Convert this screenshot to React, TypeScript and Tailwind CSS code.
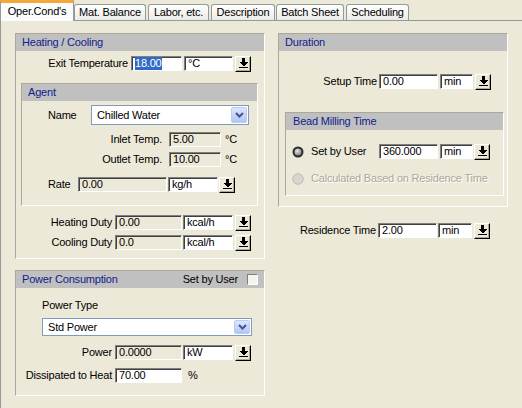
import React from 'react';

function ArrowBtn({ cls = '' }: { cls?: string }) {
  return (
    <div className={`${cls} w-[16px] h-[16px] shrink-0 bg-[#ECE9D8] border border-t-white border-l-white border-r-black border-b-black shadow-[inset_-1px_-1px_0_#ACA899] flex items-center justify-center`}>
      <svg width="9" height="11" viewBox="0 0 9 11" shapeRendering="crispEdges">
        <rect x="3" y="0" width="3" height="4" fill="#000" />
        <polygon points="0,4 9,4 4.5,8.5" fill="#000" />
        <rect x="0" y="9" width="9" height="1" fill="#000" />
      </svg>
    </div>
  );
}

function Field({ cls, value, ro = false, sel = false }: { cls: string; value: string; ro?: boolean; sel?: boolean }) {
  return (
    <div className={`${cls} h-[15px] shrink-0 border border-t-[#808080] border-l-[#808080] border-r-white border-b-white shadow-[inset_1px_1px_0_#404040] flex items-center pl-[3px] overflow-hidden whitespace-nowrap ${ro ? 'bg-[#ECE9D8]' : 'bg-white'}`}>
      {sel ? <span className="bg-[#316AC5] text-white h-[13px] flex items-center">{value}</span> : <span>{value}</span>}
    </div>
  );
}

function Combo({ cls, text }: { cls: string; text: string }) {
  return (
    <div className={`${cls} shrink-0 bg-white border border-[#7F9DB9] flex items-stretch pl-[5px]`}>
      <span className="flex-1 flex items-center">{text}</span>
      <div className="w-[16px] my-[1px] mr-[1px] rounded-[2px] border border-[#BACCF5] bg-gradient-to-b from-[#DCE6FD] to-[#B2C6F3] flex items-center justify-center">
        <svg width="9" height="6" viewBox="0 0 9 6">
          <path d="M1 1 L4.5 4.5 L8 1" stroke="#3F5590" strokeWidth="2" fill="none" />
        </svg>
      </div>
    </div>
  );
}

function Panel({ cls, title, right, children, hpl = 'pl-[6px]' }: { cls: string; title: string; right?: React.ReactNode; children: React.ReactNode; hpl?: string }) {
  return (
    <div className={`${cls} border border-t-[#ACA899] border-l-[#ACA899] border-r-white border-b-white flex flex-col`}>
      <div className={`h-[17px] shrink-0 bg-[#C0C0C0] flex items-center ${hpl} text-[#10208C]`}>
        <span className="flex-1">{title}</span>
        {right}
      </div>
      {children}
    </div>
  );
}

function Radio({ on }: { on: boolean }) {
  return on ? (
    <svg width="12" height="12" viewBox="0 0 12 12" className="shrink-0">
      <defs>
        <radialGradient id="rg" cx="40%" cy="35%" r="70%">
          <stop offset="0%" stopColor="#e8e8e8" />
          <stop offset="100%" stopColor="#7a7a7a" />
        </radialGradient>
      </defs>
      <circle cx="6" cy="6" r="5.5" fill="#2a2a2a" />
      <circle cx="6" cy="6" r="3.6" fill="url(#rg)" />
    </svg>
  ) : (
    <svg width="12" height="12" viewBox="0 0 12 12" className="shrink-0">
      <circle cx="6" cy="6" r="5.3" fill="#D6D5CF" stroke="#B3B2AA" strokeWidth="0.8" />
    </svg>
  );
}

const tabBase = 'shrink-0 h-[16px] border border-b-0 border-[#919B9C] rounded-t-[3px] bg-gradient-to-b from-white to-[#ECEBE6] flex items-center justify-center whitespace-nowrap';

export default function App() {
  return (
    <div className="w-[522px] h-[408px] overflow-hidden bg-[#ECE9D8] font-['Liberation_Sans',Arial,sans-serif] text-[11px] leading-[13px] tracking-[-0.2px] text-black flex flex-col">
      {/* tabs */}
      <div className="h-[20px] shrink-0 flex items-end">
        <div className="relative z-10 w-[74px] h-[21px] -mb-[1px] shrink-0 bg-[#FCFCFE] border-x border-[#919B9C] border-t-[3px] border-t-[#F3A93A] flex items-center justify-center pb-[2px] whitespace-nowrap">Oper.Cond's</div>
        <div className={`${tabBase} w-[72px]`}>Mat. Balance</div>
        <div className={`${tabBase} w-[61px] ml-[2px]`}>Labor, etc.</div>
        <div className={`${tabBase} w-[64px] ml-[2px]`}>Description</div>
        <div className={`${tabBase} w-[68px] ml-[1px]`}>Batch Sheet</div>
        <div className={`${tabBase} w-[63px] ml-[2px]`}>Scheduling</div>
      </div>

      {/* page */}
      <div className="flex-1 border-t border-l border-[#919B9C] flex items-start pl-[14px] pt-[12px]">
        {/* left column */}
        <div className="w-[250px] shrink-0 flex flex-col">
          <Panel cls="w-[250px]" title="Heating / Cooling">
            <div className="mt-[5px] flex items-center h-[15px]">
              <span className="w-[115px] text-right pr-[3px] whitespace-nowrap">Exit Temperature</span>
              <Field cls="w-[51px]" value="18.00" sel />
              <Field cls="w-[49px] ml-[2px]" value="°C" />
              <ArrowBtn cls="ml-[2px]" />
            </div>

            <Panel cls="mt-[12px] ml-[5px] w-[237px] pb-[13px]" title="Agent">
              <div className="mt-[4px] flex items-center pl-[26px]">
                <span className="w-[43px]">Name</span>
                <Combo cls="w-[158px] h-[20px]" text="Chilled Water" />
              </div>
              <div className="mt-[7px] flex items-center h-[15px]">
                <span className="w-[147px] text-right pr-[7px] whitespace-nowrap">Inlet Temp.</span>
                <Field cls="w-[52px]" value="5.00" ro />
                <span className="ml-[4px]">°C</span>
              </div>
              <div className="mt-[5px] flex items-center h-[15px]">
                <span className="w-[147px] text-right pr-[7px] whitespace-nowrap">Outlet Temp.</span>
                <Field cls="w-[52px]" value="10.00" ro />
                <span className="ml-[4px]">°C</span>
              </div>
              <div className="mt-[10px] flex items-center h-[15px] pl-[26px]">
                <span className="w-[30px]">Rate</span>
                <Field cls="w-[89px]" value="0.00" ro />
                <Field cls="w-[50px] ml-[1px]" value="kg/h" />
                <ArrowBtn cls="ml-[1px]" />
              </div>
            </Panel>

            <div className="mt-[9px] flex items-center h-[15px]">
              <span className="w-[99px] text-right pr-[3px] whitespace-nowrap">Heating Duty</span>
              <Field cls="w-[67px]" value="0.00" ro />
              <Field cls="w-[50px] ml-[1px]" value="kcal/h" />
              <ArrowBtn cls="ml-[2px]" />
            </div>
            <div className="mt-[5px] mb-[8px] flex items-center h-[15px]">
              <span className="w-[99px] text-right pr-[3px] whitespace-nowrap">Cooling Duty</span>
              <Field cls="w-[67px]" value="0.0" ro />
              <Field cls="w-[50px] ml-[1px]" value="kcal/h" />
              <ArrowBtn cls="ml-[2px]" />
            </div>
          </Panel>

          <Panel
            cls="mt-[11px] w-[250px] pb-[12px]"
            title="Power Consumption"
            right={
              <div className="flex items-center pr-[6px] h-full">
                <span className="text-black">Set by User</span>
                <div className="ml-[9px] w-[11px] h-[11px] border border-t-[#808080] border-l-[#808080] border-r-white border-b-white bg-[#F4F3EE]" />
              </div>
            }
          >
            <div className="mt-[11px] pl-[26px]">Power Type</div>
            <Combo cls="mt-[6px] ml-[26px] w-[210px] h-[18px]" text="Std Power" />
            <div className="mt-[9px] flex items-center h-[15px]">
              <span className="w-[99px] text-right pr-[3px] whitespace-nowrap">Power</span>
              <Field cls="w-[67px]" value="0.0000" ro />
              <Field cls="w-[50px] ml-[1px]" value="kW" />
              <ArrowBtn cls="ml-[2px]" />
            </div>
            <div className="mt-[8px] flex items-center h-[15px]">
              <span className="w-[99px] text-right pr-[3px] whitespace-nowrap">Dissipated to Heat</span>
              <Field cls="w-[67px]" value="70.00" />
              <span className="ml-[6px]">%</span>
            </div>
          </Panel>
        </div>

        {/* right column */}
        <div className="ml-[13px] w-[230px] shrink-0 flex flex-col">
          <Panel cls="w-[230px] pb-[10px]" title="Duration">
            <div className="mt-[23px] flex items-center h-[15px]">
              <span className="w-[100px] text-right pr-[2px] whitespace-nowrap">Setup Time</span>
              <Field cls="w-[59px]" value="0.00" />
              <Field cls="w-[33px] ml-[2px]" value="min" />
              <ArrowBtn cls="ml-[2px]" />
            </div>
            <Panel cls="mt-[23px] ml-[6px] w-[219px] pb-[10px]" title="Bead Milling Time" hpl="pl-[7px]">
              <div className="mt-[14px] flex items-center h-[15px] pl-[6px]">
                <Radio on />
                <span className="ml-[7px] w-[68px] whitespace-nowrap">Set by User</span>
                <Field cls="w-[59px]" value="360.000" />
                <Field cls="w-[33px] ml-[2px]" value="min" />
                <ArrowBtn cls="ml-[1px]" />
              </div>
              <div className="mt-[13px] flex items-center h-[13px] pl-[6px]">
                <Radio on={false} />
                <span className="ml-[7px] whitespace-nowrap text-[#ACA899] [text-shadow:1px_1px_0_#ffffff]">Calculated Based on Residence Time</span>
              </div>
            </Panel>
          </Panel>
          <div className="mt-[16px] flex items-center h-[15px]">
            <span className="w-[100px] text-right pr-[2px] whitespace-nowrap">Residence Time</span>
            <Field cls="w-[59px]" value="2.00" />
            <Field cls="w-[34px] ml-[1px]" value="min" />
            <ArrowBtn cls="ml-[2px]" />
          </div>
        </div>
      </div>
    </div>
  );
}
